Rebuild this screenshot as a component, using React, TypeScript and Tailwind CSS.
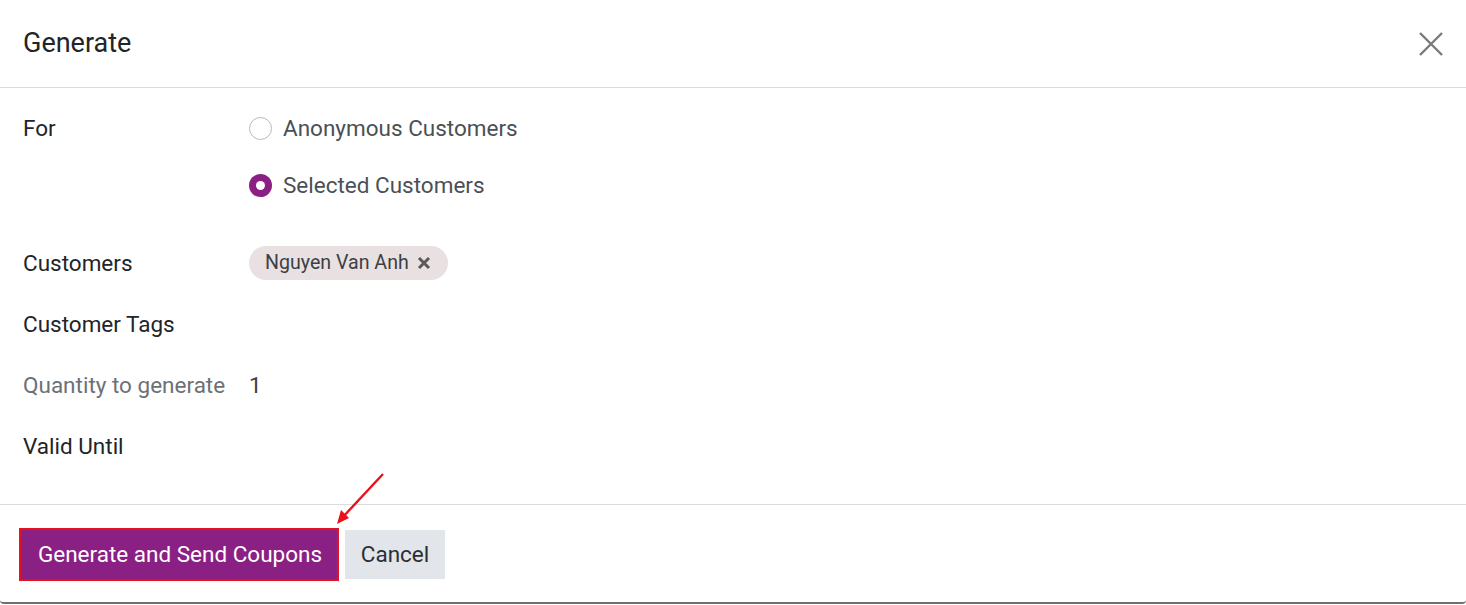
import React from "react";

export default function App() {
  return (
    <div className="w-[1466px] h-[605px] bg-white overflow-hidden" style={{ fontFamily: "Roboto, 'Liberation Sans', sans-serif" }}>
      <div className="relative h-[604px] bg-white rounded-b-[4px] border-b-2 border-[#6f6f6f] flex flex-col">
        {/* Header */}
        <div className="h-[88px] border-b border-[#dcdcdc] flex items-center justify-between pl-[23px] pr-[22px]">
          <h1 className="text-[27px] text-[#212529] leading-none">Generate</h1>
          <svg width="26" height="26" viewBox="0 0 26 26" className="text-[#7a7a7a]">
            <path d="M2 2 L24 24 M24 2 L2 24" stroke="currentColor" strokeWidth="2.4" strokeLinecap="butt" />
          </svg>
        </div>
        {/* Body */}
        <div className="flex-1 pl-[23px] pt-[25px] text-[22.5px] leading-[30px]">
          <div className="flex">
            <div className="w-[226px] text-[#212529]">For</div>
            <div className="flex flex-col gap-[27px]">
              <label className="flex items-center gap-[11px] h-[30px] text-[#4b5057]">
                <span className="w-[23px] h-[23px] rounded-full border border-[#b9b9b9] bg-white" />
                Anonymous Customers
              </label>
              <label className="flex items-center gap-[11px] h-[30px] text-[#4b5057]">
                <span className="w-[23px] h-[23px] rounded-full bg-[#8a1f84] flex items-center justify-center">
                  <span className="w-[9px] h-[9px] rounded-full bg-white" />
                </span>
                Selected Customers
              </label>
            </div>
          </div>
          <div className="flex items-center mt-[46px] h-[34px]">
            <div className="w-[226px] text-[#212529]">Customers</div>
            <div className="h-[34px] rounded-full bg-[#e8e0e1] flex items-center pl-[16px] pr-[17px] gap-[8px] text-[#3c4045] text-[19.6px]">
              <span>Nguyen Van Anh</span>
              <svg width="14" height="14" viewBox="0 0 14 14">
                <path d="M2 2 L12 12 M12 2 L2 12" stroke="#5a5a5a" strokeWidth="3" />
              </svg>
            </div>
          </div>
          <div className="flex items-center mt-[27px] h-[34px]">
            <div className="w-[226px] text-[#212529]">Customer Tags</div>
          </div>
          <div className="flex items-center mt-[27px] h-[34px]">
            <div className="w-[226px] text-[#6c7176]">Quantity to generate</div>
            <div className="text-[#3c4045]">1</div>
          </div>
          <div className="flex items-center mt-[27px] h-[34px]">
            <div className="w-[226px] text-[#212529]">Valid Until</div>
          </div>
        </div>
        {/* Footer */}
        <div className="h-[98px] border-t border-[#dcdcdc] flex items-start pt-[23px] pl-[19px] gap-[6px]">
          <button className="h-[53px] w-[320px] pl-[2px] bg-[#8a1f84] text-white text-[22.5px] border-2 border-[#e8121c]">
            Generate and Send Coupons
          </button>
          <button className="h-[49px] w-[100px] mt-[2px] bg-[#e2e5e9] text-[#2b2f33] text-[22.5px]">Cancel</button>
        </div>
        {/* Annotation arrow */}
        <svg className="absolute left-[330px] top-[468px]" width="60" height="62" viewBox="0 0 60 62">
          <path d="M53 6 L12 50" stroke="#e8121c" strokeWidth="2.4" />
          <path d="M7 56 L11 42 L19 50 Z" fill="#e8121c" />
        </svg>
      </div>
    </div>
  );
}
